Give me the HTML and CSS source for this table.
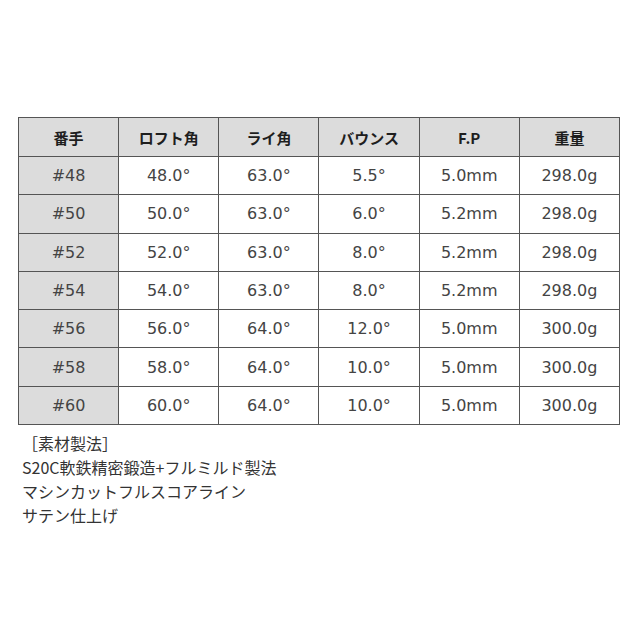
FILE: index.html
```html
<!DOCTYPE html>
<html lang="ja">
<head>
<meta charset="utf-8">
<link rel="stylesheet" href="styles.css">
</head>
<body>
<div class="page">
  <table class="spec">
    <thead>
      <tr><th>番手</th><th>ロフト角</th><th>ライ角</th><th>バウンス</th><th>F.P</th><th>重量</th></tr>
    </thead>
    <tbody>
      <tr><td class="num">#48</td><td>48.0°</td><td>63.0°</td><td>5.5°</td><td>5.0mm</td><td>298.0g</td></tr>
      <tr><td class="num">#50</td><td>50.0°</td><td>63.0°</td><td>6.0°</td><td>5.2mm</td><td>298.0g</td></tr>
      <tr><td class="num">#52</td><td>52.0°</td><td>63.0°</td><td>8.0°</td><td>5.2mm</td><td>298.0g</td></tr>
      <tr><td class="num">#54</td><td>54.0°</td><td>63.0°</td><td>8.0°</td><td>5.2mm</td><td>298.0g</td></tr>
      <tr><td class="num">#56</td><td>56.0°</td><td>64.0°</td><td>12.0°</td><td>5.0mm</td><td>300.0g</td></tr>
      <tr><td class="num">#58</td><td>58.0°</td><td>64.0°</td><td>10.0°</td><td>5.0mm</td><td>300.0g</td></tr>
      <tr><td class="num">#60</td><td>60.0°</td><td>64.0°</td><td>10.0°</td><td>5.0mm</td><td>300.0g</td></tr>
    </tbody>
  </table>
  <div class="notes">
    <p>［素材製法］</p>
    <p>S20C軟鉄精密鍛造+フルミルド製法</p>
    <p>マシンカットフルスコアライン</p>
    <p>サテン仕上げ</p>
  </div>
</div>
</body>
</html>
```
FILE: styles.css
```css
html, body {
  margin: 0;
  padding: 0;
  background: #ffffff;
}
.page {
  padding: 117px 0 0 18px;
  font-family: "DejaVu Sans", "Noto Sans CJK JP", sans-serif;
  color: #444444;
}
.spec {
  border-collapse: collapse;
  table-layout: fixed;
  width: 602px;
}
.spec th, .spec td {
  border: 1px solid #555555;
  padding: 0;
  text-align: center;
  font-size: 16px;
}
.spec th {
  height: 38px;
  background: #dcdcdc;
  color: #1e1e1e;
  font-family: "Noto Sans CJK JP", sans-serif;
  font-weight: 700;
  font-size: 15px;
}
.spec td {
  height: 37.3px;
  background: #ffffff;
}
.spec td.num {
  background: #dcdcdc;
}
.notes {
  margin-top: 6px;
  font-family: "Noto Sans CJK JP", sans-serif;
  font-size: 16px;
  color: #333333;
  padding-left: 4px;
}
.notes p {
  margin: 0;
  line-height: 24px;
}
```
